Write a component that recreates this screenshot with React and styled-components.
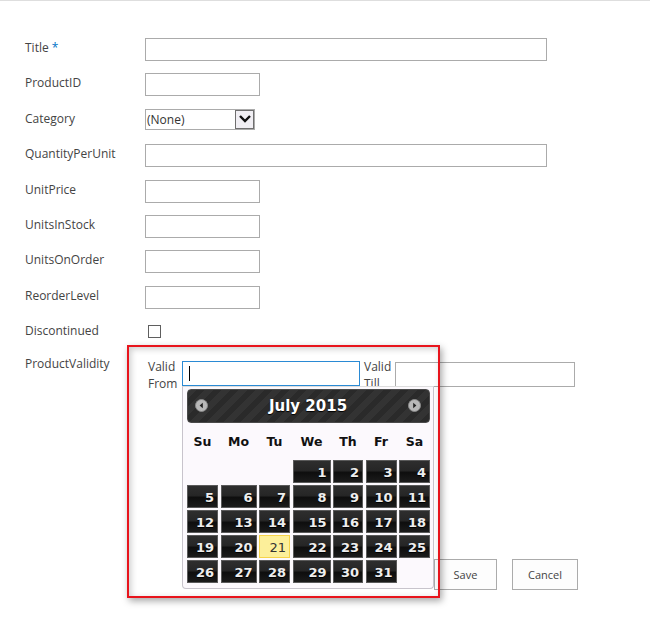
import React from 'react';
import styled, { createGlobalStyle } from 'styled-components';

const GlobalStyle = createGlobalStyle`
  html, body {
    margin: 0;
    padding: 0;
    background: #ffffff;
  }
  body {
    font-family: "Open Sans", "Liberation Sans", sans-serif;
  }
`;

const weekDays = ['Su', 'Mo', 'Tu', 'We', 'Th', 'Fr', 'Sa'];
// July 2015 starts on a Wednesday
const days = [null, null, null, ...Array.from({ length: 31 }, (_, i) => i + 1)];

const fields = [
  { label: 'Title', required: true, kind: 'wide' },
  { label: 'ProductID', kind: 'narrow' },
  { label: 'Category', kind: 'select' },
  { label: 'QuantityPerUnit', kind: 'wide' },
  { label: 'UnitPrice', kind: 'narrow' },
  { label: 'UnitsInStock', kind: 'narrow' },
  { label: 'UnitsOnOrder', kind: 'narrow' },
  { label: 'ReorderLevel', kind: 'narrow' },
  { label: 'Discontinued', kind: 'check' },
];

const renderControl = (kind) => {
  if (kind === 'select') {
    return (
      <Select>
        <SelectText>(None)</SelectText>
        <SelectArrow>
          <svg width="14" height="10" viewBox="0 0 14 10">
            <polyline points="2,2 7,7 12,2" fill="none" stroke="#111" strokeWidth="2.4" />
          </svg>
        </SelectArrow>
      </Select>
    );
  }
  if (kind === 'check') return <Checkbox />;
  return <TextInput $wide={kind === 'wide'} />;
};

const Arrow = ({ dir }) => (
  <NavIcon>
    <svg width="13" height="13" viewBox="0 0 13 13">
      <circle cx="6.5" cy="6.5" r="6" fill="#b9b9b9" stroke="#8a8a8a" strokeWidth="1" />
      {dir === 'prev' ? (
        <polygon points="7.8,3.8 4.6,6.5 7.8,9.2" fill="#222" />
      ) : (
        <polygon points="5.2,3.8 8.4,6.5 5.2,9.2" fill="#222" />
      )}
    </svg>
  </NavIcon>
);

const App = () => {
  return (
    <Page>
      <GlobalStyle />
      <Form>
        {fields.map((f) => (
          <Row key={f.label}>
            <Label>
              {f.label}
              {f.required && <Required> *</Required>}
            </Label>
            {renderControl(f.kind)}
          </Row>
        ))}
        <Row>
          <Label $raised>ProductValidity</Label>
          <Validity>
            <SubLabel>Valid From</SubLabel>
            <PickerWrap>
              <DateBox $focused>
                <Caret />
              </DateBox>
              <Popup>
                <CalHeader>
                  <Arrow dir="prev" />
                  <CalTitle>July 2015</CalTitle>
                  <Arrow dir="next" />
                </CalHeader>
                <WeekRow>
                  {weekDays.map((d) => (
                    <WeekDay key={d}>{d}</WeekDay>
                  ))}
                </WeekRow>
                <DayGrid>
                  {days.map((d, i) =>
                    d ? (
                      <Day key={i} $today={d === 21}>
                        {d}
                      </Day>
                    ) : (
                      <span key={i} />
                    )
                  )}
                </DayGrid>
              </Popup>
            </PickerWrap>
            <SubLabel $till>Valid Till</SubLabel>
            <DateBox $till />
          </Validity>
        </Row>
        <ButtonBar>
          <Button>Save</Button>
          <Button $wide>Cancel</Button>
        </ButtonBar>
      </Form>
      <Highlight />
    </Page>
  );
};

const Page = styled.div`
  position: relative;
  width: 650px;
  height: 618px;
  border-top: 1px solid #dedede;
  box-sizing: border-box;
  overflow: hidden;
`;

const Form = styled.div`
  padding: 37px 0 0 25px;
`;

const Row = styled.div`
  display: flex;
  align-items: flex-start;
  height: 35.4px;
`;

const Label = styled.div`
  width: 120px;
  flex-shrink: 0;
  padding-top: 1px;
  margin-top: ${(p) => (p.$raised ? '-3px' : '0')};
  font-size: 12px;
  line-height: 17px;
  color: #444444;
`;

const Required = styled.span`
  color: #0072c6;
`;

const TextInput = styled.input`
  box-sizing: border-box;
  width: ${(p) => (p.$wide ? '402px' : '115px')};
  height: 23px;
  margin: 0;
  padding: 2px 4px;
  border: 1px solid #ababab;
  background: #ffffff;
  font: inherit;
  outline: none;
`;

const Select = styled.div`
  box-sizing: border-box;
  display: flex;
  align-items: center;
  justify-content: space-between;
  width: 110px;
  height: 21px;
  border: 1px solid #ababab;
  background: #ffffff;
  padding: 0 0 0 1px;
`;

const SelectText = styled.span`
  font-size: 12px;
  color: #333333;
`;

const SelectArrow = styled.div`
  box-sizing: border-box;
  display: flex;
  align-items: center;
  justify-content: center;
  width: 19px;
  height: 19px;
  border: 1px solid #6f6f6f;
  background: #f1eff4;
`;

const Checkbox = styled.div`
  box-sizing: border-box;
  width: 13px;
  height: 13px;
  margin: 4px 0 0 3px;
  border: 1px solid #5f5f5f;
  background: #ffffff;
`;

const Validity = styled.div`
  display: flex;
  align-items: flex-start;
  padding-left: 3px;
`;

const SubLabel = styled.div`
  width: ${(p) => (p.$till ? '31px' : '32px')};
  margin-left: ${(p) => (p.$till ? '4px' : '0')};
  padding-top: 1px;
  font-size: 12px;
  line-height: 17px;
  color: #444444;
`;

const PickerWrap = styled.div`
  position: relative;
  margin-left: 2px;
`;

const DateBox = styled.div`
  box-sizing: border-box;
  display: flex;
  align-items: center;
  width: ${(p) => (p.$till ? '180px' : '178px')};
  height: 25px;
  margin-top: ${(p) => (p.$till ? '5px' : '4px')};
  border: 1px solid ${(p) => (p.$focused ? '#2a8ad4' : '#ababab')};
  background: #ffffff;
`;

const Caret = styled.span`
  width: 1px;
  height: 15px;
  margin-left: 6px;
  background: #000000;
`;

const Popup = styled.div`
  position: absolute;
  top: 29px;
  left: 0;
  z-index: 2;
  box-sizing: border-box;
  width: 252px;
  height: 203px;
  padding: 2px 3px 0 4px;
  border: 1px solid #c8c4cc;
  border-top-color: #dddddd;
  border-radius: 0 0 4px 4px;
  background: #fcf9fd;
  font-family: "DejaVu Sans", Verdana, sans-serif;
`;

const CalHeader = styled.div`
  box-sizing: border-box;
  display: flex;
  align-items: center;
  justify-content: space-between;
  height: 34px;
  padding: 0 8px 0 7px;
  border: 1px solid #4a4a4a;
  border-radius: 4px;
  background: repeating-linear-gradient(
    135deg,
    #333333 0px,
    #333333 6px,
    #2a2a2a 6px,
    #2a2a2a 12px
  );
`;

const NavIcon = styled.span`
  display: flex;
`;

const CalTitle = styled.span`
  color: #ffffff;
  font-weight: bold;
  font-size: 15px;
  text-shadow: 0 1px 1px #000000;
`;

const WeekRow = styled.div`
  display: grid;
  grid-template-columns: 31px 36px 31px 38px 30px 31px 31px;
  column-gap: 2.5px;
  height: 24px;
  margin-top: 7px;
  align-items: center;
`;

const WeekDay = styled.span`
  text-align: center;
  font-size: 12.5px;
  font-weight: bold;
  color: #111111;
`;

const DayGrid = styled.div`
  display: grid;
  grid-template-columns: 31px 36px 31px 38px 30px 31px 31px;
  grid-auto-rows: 23px;
  column-gap: 2.5px;
  row-gap: 2px;
  margin-top: 6px;
`;

const Day = styled.span`
  box-sizing: border-box;
  display: flex;
  align-items: center;
  justify-content: flex-end;
  padding: 2px 3px 0 0;
  border: 1px solid ${(p) => (p.$today ? '#f6d34a' : '#5a5a5a')};
  background: ${(p) =>
    p.$today
      ? '#fcef9a'
      : 'linear-gradient(#2e2e2e 0%, #262626 45%, #0e0e0e 55%, #1b1b1b 100%)'};
  color: ${(p) => (p.$today ? '#333333' : '#eeeeee')};
  font-size: 13px;
  font-weight: ${(p) => (p.$today ? 'normal' : 'bold')};
  text-shadow: ${(p) => (p.$today ? 'none' : '0 1px 0 #000000')};
`;

const ButtonBar = styled.div`
  display: flex;
  justify-content: flex-end;
  gap: 15px;
  width: 553px;
  margin-top: 167px;
`;

const Button = styled.button`
  box-sizing: border-box;
  width: ${(p) => (p.$wide ? '66px' : '63px')};
  height: 31px;
  margin: 0;
  padding: 0;
  border: 1px solid #ababab;
  background: #fdfdfd;
  color: #444444;
  font-family: "Open Sans", "Liberation Sans", sans-serif;
  font-size: 11px;
`;

const Highlight = styled.div`
  position: absolute;
  left: 127px;
  top: 344px;
  z-index: 3;
  width: 313px;
  height: 253px;
  box-sizing: border-box;
  border: 2px solid #e8141c;
  box-shadow: 2px 3px 7px rgba(0, 0, 0, 0.35), inset 2px 2px 6px rgba(0, 0, 0, 0.2);
  pointer-events: none;
`;

export default App;
